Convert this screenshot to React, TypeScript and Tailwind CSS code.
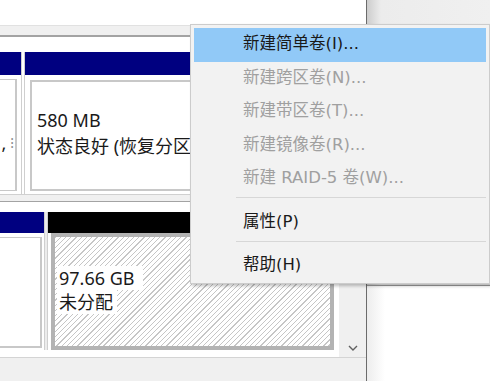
import React from "react";

function Item({ children, hl, disabled }: { children: React.ReactNode; hl?: boolean; disabled?: boolean }) {
  return (
    <div
      className={
        "flex h-[33.5px] items-center whitespace-nowrap pl-[49px] font-['DejaVu_Sans','Noto_Sans_CJK_SC',sans-serif] text-[16.5px] " +
        (hl ? "bg-[#91c9f7] " : "") +
        (disabled ? "text-[#a0a0a0]" : "text-[#1a1a1a]")
      }
    >
      {children}
    </div>
  );
}

function Sep() {
  return (
    <div className="h-[10px] pt-[1.5px]">
      <div className="ml-[42px] h-px bg-[#d7d7d7]" />
    </div>
  );
}

export default function App() {
  return (
    <div className="relative flex h-[381px] w-[490px] overflow-hidden bg-white font-['Noto_Sans','Noto_Sans_CJK_SC',sans-serif] text-[#1a1a1a]">
      {/* left pane */}
      <div className="flex h-full w-[367px] flex-col border-r border-[#6b6b6b] bg-white">
        <div className="h-[25px] bg-white" />
        <div className="h-[12px] border-t border-b-2 border-t-[#e1e1e1] border-b-[#a3a3a3] bg-[#f0f0f0]" />
        <div className="flex h-[320px]">
          <div className="flex flex-1 flex-col pt-[15px]">
            {/* disk row 1 */}
            <div className="flex h-[142px]">
              <div className="flex w-[21px] flex-col">
                <div className="h-[23px] bg-[#000080]" />
                <div className="flex-1 pt-[4px] pr-[4px] pb-[3px]">
                  <div className="flex h-full flex-col overflow-hidden border-t border-r-2 border-b border-[#c8c8c8] pt-[24px] text-[18px] leading-[26px]">
                    <div>&nbsp;</div>
                    <div className="flex justify-end whitespace-nowrap pr-[1px]">
                      <span>,</span>
                      <span className="ml-[4px] text-[14px] text-[#8a8a8a]">⁝</span>
                    </div>
                  </div>
                </div>
              </div>
              <div className="w-[4px] border-x border-[#cfcfcf] bg-white" />
              <div className="flex flex-1 flex-col">
                <div className="h-[23px] bg-[#000080]" />
                <div className="flex-1 p-[5px] pb-[3px]">
                  <div className="flex h-full flex-col border-2 border-[#c8c8c8] pt-[25px] pl-[5px] text-[18px] leading-[26px]">
                    <div className="whitespace-nowrap">580 MB</div>
                    <div className="whitespace-nowrap">状态良好 (恢复分区)</div>
                  </div>
                </div>
              </div>
            </div>
            {/* band between rows */}
            <div className="h-[8px] border-t border-b border-t-[#d0d0d0] border-b-[#a3a3a3] bg-[#f0f0f0]" />
            <div className="h-[10px]" />
            {/* disk row 2 */}
            <div className="flex h-[138px]">
              <div className="flex w-[44px] flex-col">
                <div className="h-[21px] bg-[#000080]" />
                <div className="flex-1 pt-[4px] pr-[2px] pb-[2px]">
                  <div className="h-full border-t border-r-2 border-b-2 border-[#c8c8c8]" />
                </div>
              </div>
              <div className="w-[4px] border-x border-[#cfcfcf] bg-[#ececec]" />
              <div className="flex flex-1 flex-col">
                <div className="h-[21px] bg-black" />
                <div className="flex-1 pr-[5px] pl-[3px]">
                  <div className="h-full border-4 border-[#b3b3b3] bg-[repeating-linear-gradient(135deg,#c6c6c6_0px,#c6c6c6_0.9px,#ffffff_0.9px,#ffffff_3.7px)] pt-[29px] pl-[2px] text-[18px] leading-[24px]">
                    <div>
                      <span className="inline-block bg-white px-[2px] pr-[8px]">97.66 GB</span>
                    </div>
                    <div>
                      <span className="inline-block bg-white px-[2px] pr-[4px]">未分配</span>
                    </div>
                  </div>
                </div>
              </div>
            </div>
            <div className="flex-1" />
          </div>
          {/* vertical scrollbar */}
          <div className="flex w-[27px] flex-col items-center justify-end bg-[#f0f0f0] pb-[6px]">
            <svg width="10" height="6" viewBox="0 0 10 6">
              <polyline points="1,1 5,5 9,1" fill="none" stroke="#606060" strokeWidth="1.4" />
            </svg>
          </div>
        </div>
        <div className="flex-1 border-t border-[#d4d4d4] bg-[#f0f0f0]" />
      </div>

      {/* right pane */}
      <div className="flex flex-1 flex-col">
        <div className="h-[285px] bg-[linear-gradient(to_right,#cdcdcd,#ececec_14px,#f0f0f0)]" />
        <div className="flex-1 border-t border-[#9a9a9a] bg-[linear-gradient(to_right,#ededed,#ffffff_18px)]" />
      </div>

      {/* context menu */}
      <div className="absolute top-[24px] left-[190px] w-[300px] border border-[#cccccc] bg-[#f2f2f2] px-[3px] pt-[3px] shadow-[2px_2px_3px_rgba(0,0,0,0.25)]">
        <Item hl>新建简单卷(I)...</Item>
        <Item disabled>新建跨区卷(N)...</Item>
        <Item disabled>新建带区卷(T)...</Item>
        <Item disabled>新建镜像卷(R)...</Item>
        <Item disabled>新建 RAID-5 卷(W)...</Item>
        <Sep />
        <Item>属性(P)</Item>
        <Sep />
        <Item>帮助(H)</Item>
      </div>
    </div>
  );
}
